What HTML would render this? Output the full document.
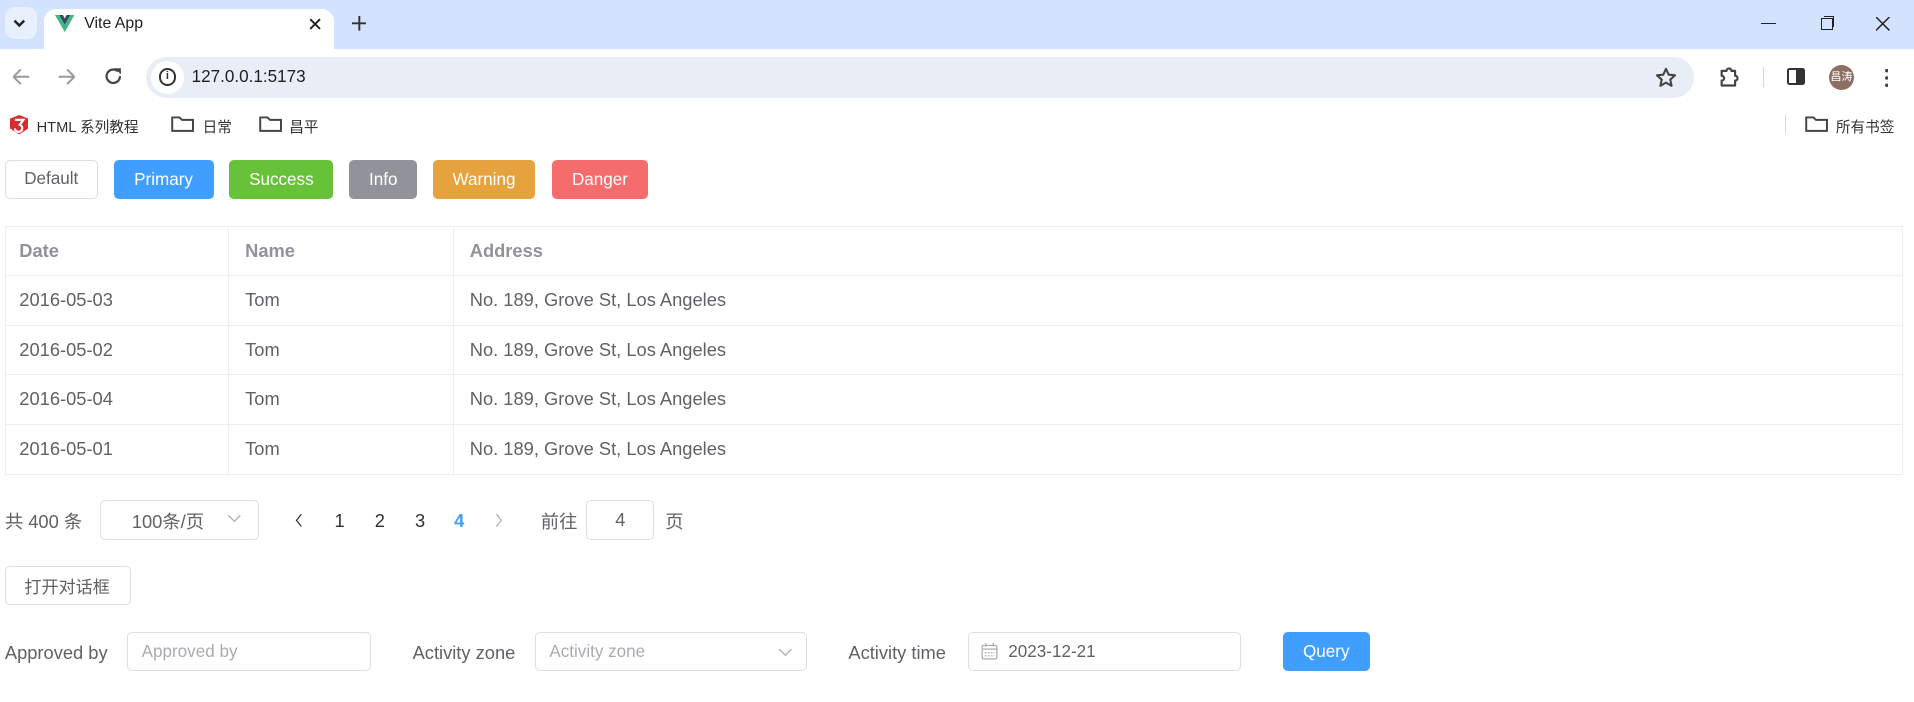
<!DOCTYPE html>
<html><head><meta charset="utf-8">
<style>
html,body{margin:0;padding:0;width:1914px;height:702px;overflow:hidden;background:#fff}
#w{zoom:1.2207;width:1568px;height:575px;position:relative;font-family:"Liberation Sans","Noto Sans CJK SC",sans-serif;color:#606266}
.a{position:absolute}
.tabs{left:0;top:0;width:1568px;height:40px;background:#d3e3fd}
.btn{position:absolute;top:131px;height:32px;border-radius:4px;color:#fff;font-size:14px;line-height:32px;text-align:center;box-sizing:border-box}
.tbl{left:4px;top:185px;width:1555px;border:1px solid #ebeef5;box-sizing:border-box}
.row{height:40.5px;border-bottom:1px solid #ebeef5;position:relative;font-size:15px;box-sizing:border-box}
.row:last-child{border-bottom:0}
.row span{position:absolute;top:0;line-height:40px}
.c1{left:11px}.c2{left:196px}.c3{left:380px}
.vl{position:absolute;top:185px;width:1px;height:203px;background:#ebeef5}
.inp{position:absolute;border:1px solid #dcdfe6;border-radius:4px;box-sizing:border-box;height:32px;background:#fff}
.t14{font-size:15px}
</style></head><body><div id="w">
<div class="a tabs"></div>
<div class="a" style="left:4px;top:6px;width:26px;height:26px;border-radius:8px;background:#e8f0fe"></div>
<svg class="a" style="left:10px;top:14px" width="12" height="10"><path d="M2 3l4 4 4-4" stroke="#222" stroke-width="2" fill="none"/></svg>
<div class="a" style="left:36px;top:7px;width:238px;height:33px;background:#fff;border-radius:10px 10px 0 0"></div>
<svg class="a" style="left:45px;top:12px" width="16" height="14"><path d="M0 0h3.5L8 8 12.5 0H16L8 14z" fill="#41b883"/><path d="M3.5 0h3L8 3 9.5 0h3L8 8z" fill="#35495e"/></svg>
<div class="a" style="left:69px;top:12px;font-size:13px;color:#1f1f1f">Vite App</div>
<svg class="a" style="left:253px;top:15px" width="10" height="10"><path d="M1 1l8 8M9 1l-8 8" stroke="#222" stroke-width="1.6"/></svg>
<svg class="a" style="left:288px;top:13px" width="12" height="12"><path d="M6 0v12M0 6h12" stroke="#333" stroke-width="1.6"/></svg>
<div class="a" style="left:1443px;top:19px;width:12px;height:1px;background:#222"></div>
<div class="a" style="left:1492px;top:15px;width:8px;height:8px;border:1px solid #222"></div>
<div class="a" style="left:1494px;top:13px;width:8px;height:8px;border-top:1px solid #222;border-right:1px solid #222"></div>
<svg class="a" style="left:1537px;top:14px" width="11" height="11"><path d="M0 0l11 11M11 0L0 11" stroke="#222" stroke-width="1.2"/></svg>
<svg class="a" style="left:9px;top:55px" width="100" height="16"><path d="M2 8h13M2 8l6-6M2 8l6 6" stroke="#999" stroke-width="1.6" fill="none"/><path d="M39 8h13M52 8l-6-6M52 8l-6 6" stroke="#999" stroke-width="1.6" fill="none"/><path d="M87.5 3.5a5.5 5.5 0 1 0 1.8 4" stroke="#444" stroke-width="1.8" fill="none"/><path d="M85 1h5v5z" fill="#444"/></svg>
<div class="a" style="left:120px;top:47px;width:1268px;height:33px;border-radius:17px;background:#e9eef6"></div>
<div class="a" style="left:124px;top:50px;width:27px;height:27px;border-radius:14px;background:#fff"></div>
<div class="a" style="left:130px;top:56px;width:11px;height:11px;border:1.8px solid #333;border-radius:50%;font-size:9px;font-weight:bold;text-align:center;line-height:11px;color:#333">i</div>
<div class="a" style="left:157px;top:55px;font-size:14px;color:#1f1f1f">127.0.0.1:5173</div>
<svg class="a" style="left:1356px;top:55px" width="18" height="17"><path d="M9 1.5l2.2 4.8 5.2.5-3.9 3.5 1.1 5.1L9 12.8l-4.6 2.6 1.1-5.1L1.6 6.8l5.2-.5z" stroke="#444" stroke-width="1.7" fill="none" stroke-linejoin="round"/></svg>
<svg class="a" style="left:1407px;top:54px" width="18" height="18"><path d="M3 4h4a2 2 0 0 1 4 0h3v4a2 2 0 0 1 0 4v4H3v-4a2 2 0 0 0 0-4z" stroke="#444" stroke-width="1.8" fill="none" stroke-linejoin="round"/></svg>
<div class="a" style="left:1444px;top:55px;width:1px;height:16px;background:#c8d8f5"></div>
<div class="a" style="left:1464px;top:56px;width:15px;height:14px;border:2px solid #333;border-radius:2px;box-sizing:border-box;background:linear-gradient(90deg,#fff 50%,#333 50%)"></div>
<div class="a" style="left:1498px;top:53px;width:21px;height:21px;border-radius:50%;background:#8d6e63;color:#fff;font-size:9px;line-height:21px;text-align:center">昌涛</div>
<div class="a" style="left:1544px;top:55px;width:3px;height:17px;background:radial-gradient(circle,#444 1.4px,transparent 1.6px) 0 0/3px 6px"></div>
<svg class="a" style="left:8px;top:94px" width="15" height="16"><path d="M7.5 0L15 3v8l-7.5 5L0 11V3z" fill="#d32f2f"/><path d="M4 4h7L8 8a3 3 0 1 1-4 3" stroke="#fff" stroke-width="1.8" fill="none"/></svg>
<div class="a" style="left:30px;top:95px;font-size:12px;color:#333">HTML 系列教程</div>
<svg class="a" style="left:140px;top:94px" width="20" height="14"><path d="M1 2h6l2 2h9v9H1z" stroke="#444" stroke-width="1.6" fill="none"/></svg>
<div class="a" style="left:166px;top:95px;font-size:12px;color:#333">日常</div>
<svg class="a" style="left:212px;top:94px" width="20" height="14"><path d="M1 2h6l2 2h9v9H1z" stroke="#444" stroke-width="1.6" fill="none"/></svg>
<div class="a" style="left:237px;top:95px;font-size:12px;color:#333">昌平</div>
<div class="a" style="left:1462px;top:94px;width:1.5px;height:16px;background:#c8d8f5"></div>
<svg class="a" style="left:1479px;top:94px" width="20" height="14"><path d="M1 2h6l2 2h9v9H1z" stroke="#444" stroke-width="1.6" fill="none"/></svg>
<div class="a" style="left:1504px;top:95px;font-size:12px;color:#333">所有书签</div>

<div class="btn" style="left:4px;width:76px;border:1px solid #dcdfe6;color:#606266;line-height:30px">Default</div>
<div class="btn" style="left:93px;width:82px;background:#409eff">Primary</div>
<div class="btn" style="left:188px;width:85px;background:#67c23a">Success</div>
<div class="btn" style="left:286px;width:56px;background:#909399">Info</div>
<div class="btn" style="left:355px;width:83px;background:#e6a23c">Warning</div>
<div class="btn" style="left:452px;width:79px;background:#f56c6c">Danger</div>

<div class="a tbl">
<div class="row" style="color:#909399;font-weight:bold"><span class="c1">Date</span><span class="c2">Name</span><span class="c3">Address</span></div>
<div class="row"><span class="c1">2016-05-03</span><span class="c2">Tom</span><span class="c3">No. 189, Grove St, Los Angeles</span></div>
<div class="row"><span class="c1">2016-05-02</span><span class="c2">Tom</span><span class="c3">No. 189, Grove St, Los Angeles</span></div>
<div class="row"><span class="c1">2016-05-04</span><span class="c2">Tom</span><span class="c3">No. 189, Grove St, Los Angeles</span></div>
<div class="row"><span class="c1">2016-05-01</span><span class="c2">Tom</span><span class="c3">No. 189, Grove St, Los Angeles</span></div>
</div>
<div class="vl" style="left:187px"></div><div class="vl" style="left:371px"></div>

<div class="a t14" style="left:4px;top:416px">共 400 条</div>
<div class="inp" style="left:82px;top:410px;width:130px"></div>
<div class="a t14" style="left:108px;top:416px">100条/页</div>
<svg class="a" style="left:186px;top:421px" width="12" height="8"><path d="M1 1l5 5 5-5" stroke="#a8abb2" fill="none"/></svg>
<svg class="a" style="left:241px;top:420px" width="8" height="12"><path d="M6 1L2 6l4 5" stroke="#303133" fill="none"/></svg>
<div class="a t14" style="left:274px;top:418px;color:#303133">1</div>
<div class="a t14" style="left:307px;top:418px;color:#303133">2</div>
<div class="a t14" style="left:340px;top:418px;color:#303133">3</div>
<div class="a t14" style="left:372px;top:418px;color:#409eff;font-weight:bold">4</div>
<svg class="a" style="left:405px;top:420px" width="8" height="12"><path d="M2 1l4 5-4 5" stroke="#a8abb2" fill="none"/></svg>
<div class="a t14" style="left:443px;top:416px">前往</div>
<div class="inp" style="left:480px;top:410px;width:56px"></div>
<div class="a t14" style="left:504px;top:417px">4</div>
<div class="a t14" style="left:545px;top:416px">页</div>

<div class="inp" style="left:4px;top:464px;width:103px"></div>
<div class="a" style="left:20px;top:469px;font-size:14px">打开对话框</div>

<div class="a t14" style="left:4px;top:526px">Approved by</div>
<div class="inp" style="left:104px;top:518px;width:200px"></div>
<div class="a" style="left:116px;top:526px;font-size:14px;color:#a8abb2">Approved by</div>
<div class="a t14" style="left:338px;top:526px">Activity zone</div>
<div class="inp" style="left:438px;top:518px;width:223px"></div>
<div class="a" style="left:450px;top:526px;font-size:14px;color:#a8abb2">Activity zone</div>
<svg class="a" style="left:637px;top:531px" width="12" height="8"><path d="M1 1l5 5 5-5" stroke="#a8abb2" fill="none"/></svg>
<div class="a t14" style="left:695px;top:526px">Activity time</div>
<div class="inp" style="left:793px;top:518px;width:224px"></div>
<svg class="a" style="left:804px;top:527px" width="14" height="14"><rect x="1" y="2" width="12" height="11" rx="1" stroke="#a8abb2" fill="none"/><path d="M1 5h12M4 0v3M10 0v3" stroke="#a8abb2"/><path d="M3 8h8M3 10.5h8" stroke="#a8abb2" stroke-dasharray="1.5 1"/></svg>
<div class="a" style="left:826px;top:526px;font-size:14px;color:#606266">2023-12-21</div>
<div class="btn" style="left:1051px;top:518px;width:71px;background:#409eff">Query</div>
</div></body></html>
